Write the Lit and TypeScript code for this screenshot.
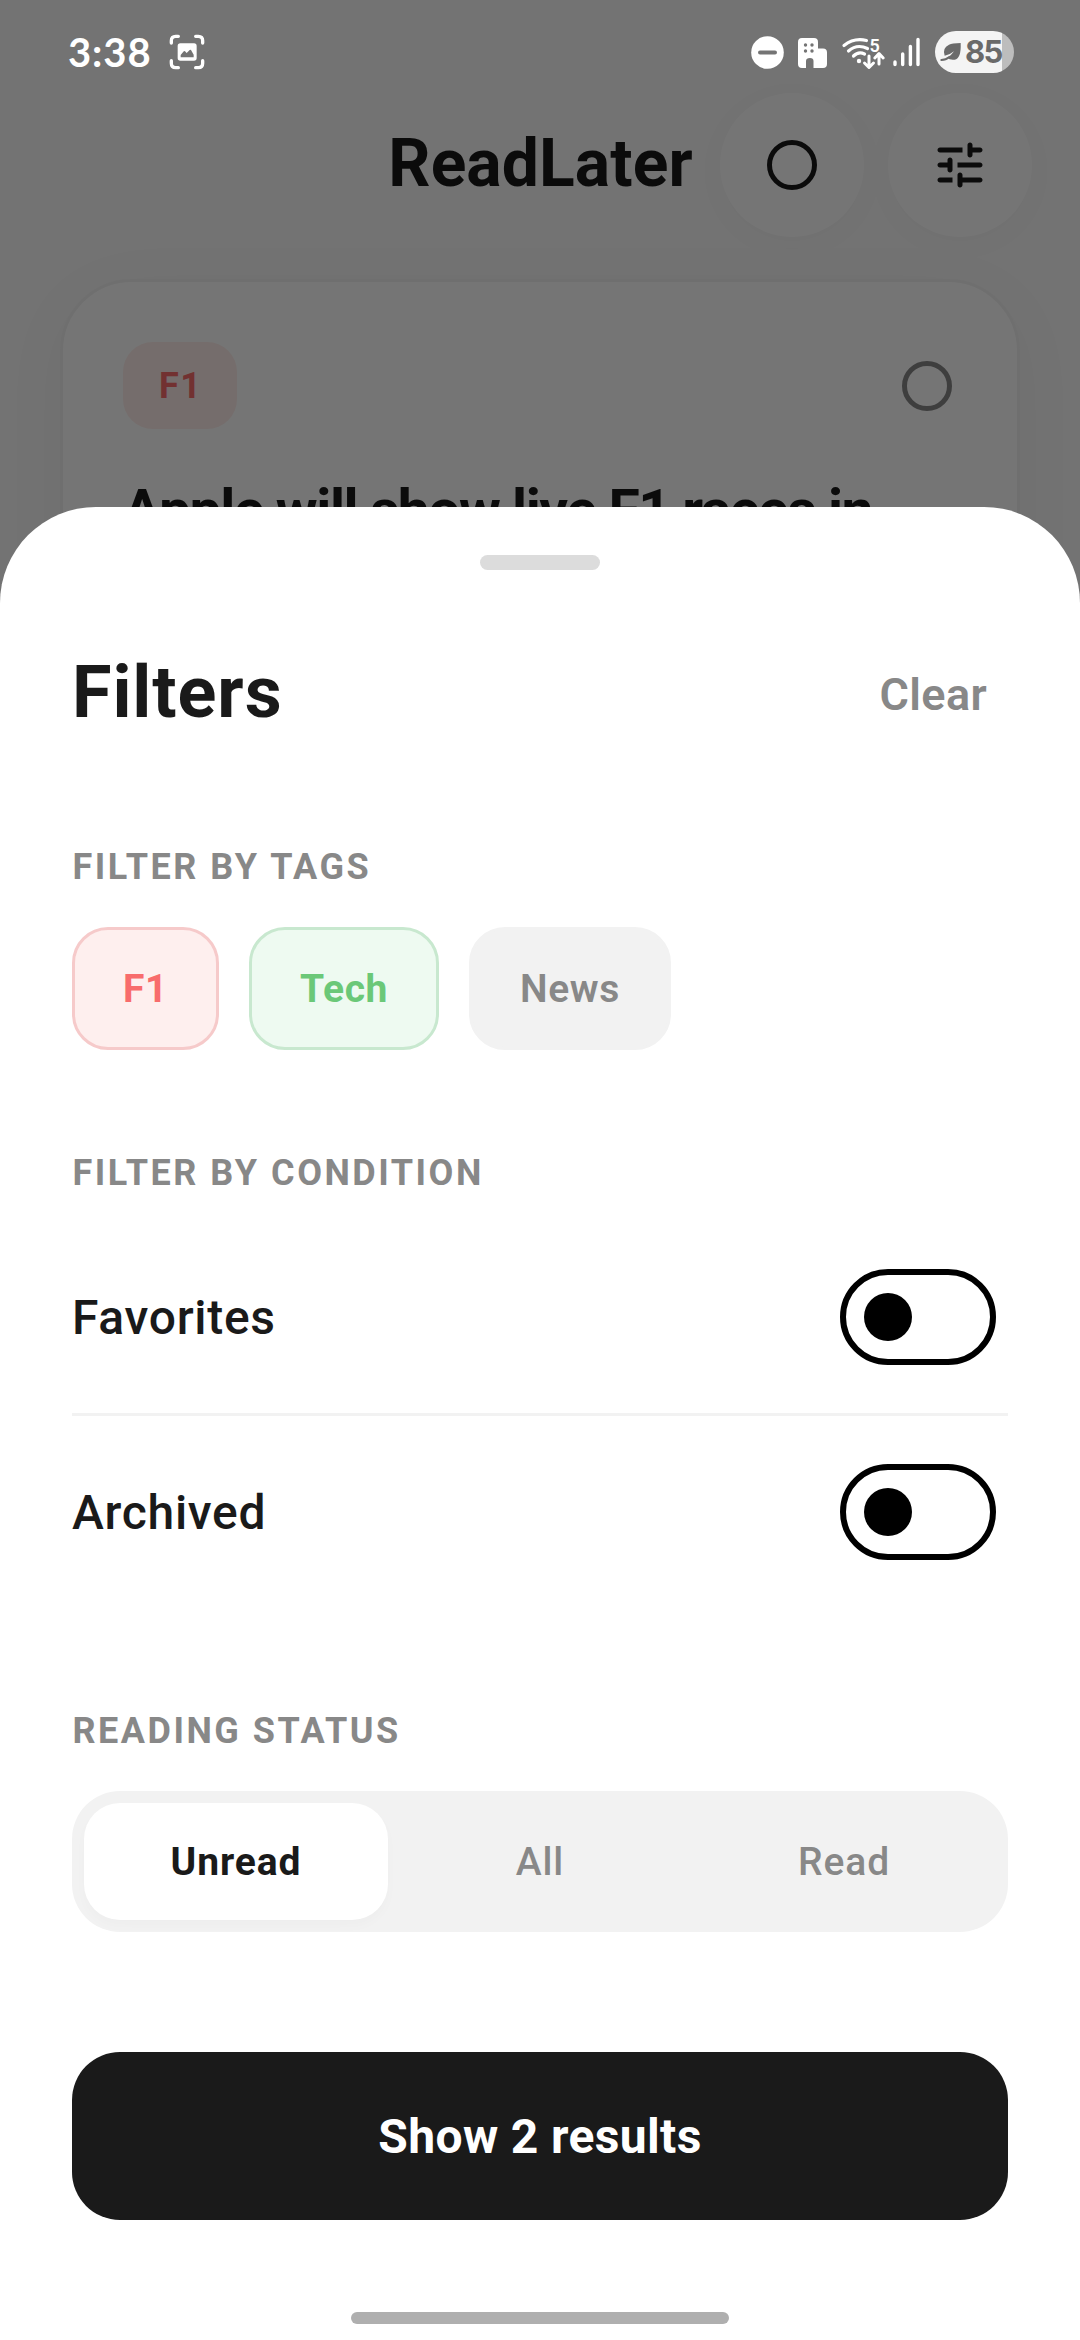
import { LitElement, html, css, svg } from "lit";
import { customElement, property, state } from "lit/decorators.js";
import { classMap } from "lit/directives/class-map.js";

@customElement("status-bar")
class StatusBar extends LitElement {
  static styles = css`
    :host {
      display: flex;
      justify-content: space-between;
      align-items: center;
      height: 104px;
      padding: 0 66px 0 68px;
      box-sizing: border-box;
      color: #fff;
    }
    .left, .right { display: flex; align-items: center; }
    .time {
      font: 700 40px/48px Lato, sans-serif;
      letter-spacing: 0.9px;
      width: 101px;
    }
    svg { display: block; overflow: visible; }
    .dnd { margin-right: 14px; }
    .building { margin: 1px 15px 0 0; }
    .wifi { margin: 2px 8px 0 0; }
    .signal { margin-right: 15px; }
    .battery {
      display: flex;
      align-items: center;
      width: 79px;
      height: 42px;
      border-radius: 21px;
      background: linear-gradient(90deg, #f4f4f4 67px, #bdbdbd 67px);
      color: #6a6a6a;
      box-sizing: border-box;
      padding-left: 5px;
      gap: 3px;
    }
    .level { font: 700 31px/42px Inter, sans-serif; letter-spacing: -1.6px; }
  `;
  render() {
    return html`
      <div class="left">
        <span class="time">3:38</span>
        <svg width="36" height="36" viewBox="0 0 108 108">
          <g fill="none" stroke="#fff" stroke-width="10" stroke-linecap="round">
            <path d="M7 27V20Q7 7 20 7H28M80 7H88Q101 7 101 20V27M101 80V88Q101 101 88 101H80M28 101H20Q7 101 7 88V80" />
          </g>
          <path fill="#fff" fill-rule="evenodd" d="M37 28H75Q83 28 83 36V72Q83 80 75 80H34Q26 80 26 72V36Q26 28 34 28ZM35 70H74V62L66 48Q64 46 62 48L53 57L48 52Q46 50 43 53L35 63Z" />
        </svg>
      </div>
      <div class="right">
        <svg class="dnd" width="33" height="33" viewBox="0 0 33 33">
          <circle cx="16.5" cy="16.5" r="16.3" fill="#fff" />
          <path d="M9 16.5H24" stroke="#747474" stroke-width="4" stroke-linecap="round" />
        </svg>
        <svg class="building" width="29" height="30" viewBox="0 0 29 30">
          <path fill="#fff" d="M4 0H16Q20 0 20 4V10.500H25Q29 10.500 29 14.500V26Q29 30 25 30H15.500V23Q15.500 20 12 20Q8 20 8 23V30H4Q0 30 0 26V4Q0 0 4 0Z" />
          <g fill="#747474">
            <circle cx="7.500" cy="7" r="1.700" /><circle cx="14" cy="7" r="1.700" />
            <circle cx="7.500" cy="13" r="1.700" /><circle cx="14" cy="13" r="1.700" />
          </g>
        </svg>
        <svg class="wifi" width="43" height="32" viewBox="0 0 43 32">
          <g fill="none" stroke="#fff" stroke-width="3.200" stroke-linecap="round" stroke-linejoin="round">
            <path d="M2 8.500Q12 .5 24.500 3.500" />
            <path d="M6.500 14Q15 6.500 25.500 11.500" />
            <path d="M11.500 19Q16.500 14 22.500 17" />
            <path stroke-width="3" d="M27 19V30M22.500 26L27 30.500L31.500 26M37 27V17M32.800 21L37 16.500L41.200 21" />
          </g>
          <circle cx="17" cy="24" r="2.200" fill="#fff" />
          <text x="27.500" y="14.500" fill="#fff" font-family="Roboto, sans-serif" font-weight="600" font-size="18">5</text>
        </svg>
        <svg class="signal" width="27" height="30" viewBox="0 0 27 30">
          <g stroke="#fff" stroke-width="3.400" stroke-linecap="round">
            <path d="M2 25V27.500M9.700 17V27.500M17.400 9.500V27.500M25 2.500V27.500" />
          </g>
        </svg>
        <div class="battery">
          <svg width="22" height="20" viewBox="0 0 66 60">
            <path fill="#6a6a6a" d="M62 3Q64 50 44 53Q30 55 21 47Q33 42 42 28Q28 40 14 41Q6 18 27 8Q36 3 62 3Z" />
            <path fill="none" stroke="#6a6a6a" stroke-width="6" stroke-linecap="round" d="M4 54Q18 54 27 46" />
          </svg>
          <span class="level">85</span>
        </div>
      </div>
    `;
  }
}

@customElement("toggle-switch")
class ToggleSwitch extends LitElement {
  @property({ type: Boolean, reflect: true }) on = false;
  static styles = css`
    :host { display: block; }
    .track {
      display: flex;
      align-items: center;
      box-sizing: border-box;
      width: 156px;
      height: 96px;
      padding: 0 18px;
      border: 6px solid #000;
      border-radius: 48px;
    }
    .thumb { width: 48px; height: 48px; border-radius: 50%; background: #000; }
    :host([on]) .track { justify-content: flex-end; }
  `;
  render() {
    return html`<div class="track" role="switch" aria-checked=${this.on}><div class="thumb"></div></div>`;
  }
}

const tuneIcon = svg`<path fill="#1a1a1a" d="M3 18c0 .55.45 1 1 1h5v-2H4c-.55 0-1 .45-1 1zM3 6c0 .55.45 1 1 1h9V5H4c-.55 0-1 .45-1 1zm10 14v-1h7c.55 0 1-.45 1-1s-.45-1-1-1h-7v-1c0-.55-.45-1-1-1s-1 .45-1 1v4c0 .55.45 1 1 1s1-.45 1-1zM7 10v1H4c-.55 0-1 .45-1 1s.45 1 1 1h3v1c0 .55.45 1 1 1s1-.45 1-1v-4c0-.55-.45-1-1-1s-1 .45-1 1zm14 2c0-.55-.45-1-1-1h-9v2h9c.55 0 1-.45 1-1zm-5-3c.55 0 1-.45 1-1V7h3c.55 0 1-.45 1-1s-.45-1-1-1h-3V4c0-.55-.45-1-1-1s-1 .45-1 1v4c0 .55.45 1 1 1z"/>`;

@customElement("app-root")
class AppRoot extends LitElement {
  @state() private status = "Unread";
  private tags = [
    { label: "F1", tone: "red" },
    { label: "Tech", tone: "green" },
    { label: "News", tone: "plain" },
  ];
  private conditions = ["Favorites", "Archived"];

  static styles = css`
    :host {
      display: grid;
      width: 1080px;
      height: 2340px;
      overflow: hidden;
      background: #fafafa;
      font-family: Roboto, sans-serif;
      color: #1a1a1a;
    }
    .page, .scrim, .front { grid-area: 1 / 1; min-width: 0; min-height: 0; }
    .page { padding: 93px 60px 0; overflow: hidden; }
    .scrim { background: rgba(0, 0, 0, 0.54); }
    .front { display: flex; flex-direction: column; justify-content: space-between; z-index: 1; }
    .bar {
      display: grid;
      grid-template-columns: 1fr auto 1fr;
      align-items: center;
      height: 144px;
      margin-right: -12px;
      margin-left: -12px;
    }
    .title {
      grid-column: 2;
      margin: 0;
      font-size: 66px;
      line-height: 78px;
      font-weight: 700;
      letter-spacing: 0.1px;
      padding: 0 0 2px 1px;
    }
    .actions { display: flex; justify-content: flex-end; gap: 24px; }
    .round {
      display: grid;
      place-items: center;
      width: 144px;
      height: 144px;
      border-radius: 50%;
      background: #fff;
      box-shadow: 0 6px 36px rgba(0, 0, 0, 0.025);
    }
    .card {
      box-sizing: border-box;
      height: 700px;
      margin-top: 42px;
      padding: 60px;
      border: 3px solid #f2f2f2;
      border-radius: 72px;
      background: #fff;
      box-shadow: 0 12px 72px rgba(0, 0, 0, 0.035);
    }
    .cardtop { display: flex; justify-content: space-between; align-items: center; height: 87px; }
    .mini {
      padding: 0 35px 0 36px;
      border-radius: 30px;
      background: #feeeeb;
      color: #f86c6c;
      font-size: 36px;
      line-height: 88px;
      height: 87px;
      font-weight: 700;
      letter-spacing: 1.4px;
    }
    .mark { display: block; margin-right: 5px; }
    .headline {
      margin: 48px 0 0;
      font-size: 57px;
      line-height: 68px;
      font-weight: 700;
      letter-spacing: -1.45px;
      white-space: nowrap;
    }
    .sheet {
      display: flex;
      flex-direction: column;
      box-sizing: border-box;
      height: 1833px;
      padding: 48px 72px 0;
      border-radius: 96px 96px 0 0;
      background: #fff;
    }
    .handle { align-self: center; flex: none; width: 120px; height: 15px; border-radius: 8px; background: #dcdcdc; }
    .sheethead { display: flex; justify-content: space-between; align-items: center; height: 96px; margin-top: 76px; }
    .filters { margin: 0; padding-bottom: 3px; font-size: 72px; line-height: 84px; font-weight: 700; letter-spacing: 0.9px; }
    .clear { padding-right: 21px; font-size: 45px; line-height: 55px; font-weight: 600; letter-spacing: 0.35px; color: #888; }
    .label { margin: 102px 0 0; font-size: 36px; line-height: 42px; font-weight: 700; letter-spacing: 2.5px; color: #888; padding-left: 0.5px; }
    .label.first { margin-top: 104px; }
    .chips { display: flex; gap: 30px; margin-top: 39px; }
    .chip {
      box-sizing: border-box;
      height: 123px;
      padding: 0 48px;
      border: 3px solid transparent;
      border-radius: 36px;
      font-size: 39px;
      line-height: 119px;
      font-weight: 600;
      letter-spacing: 0.6px;
    }
    .chip.red { background: #feefee; border-color: #f6caca; color: #f86c6c; font-weight: 700; }
    .chip.green { background: #eefaf1; border-color: #c8e8cf; color: #6bc878; font-weight: 700; }
    .chip.plain { background: #f2f2f2; border-color: #f2f2f2; color: #888; }
    .conditions { margin-top: 27px; }
    .row {
      display: flex;
      justify-content: space-between;
      align-items: center;
      height: 192px;
      padding-right: 12px;
      font-size: 48px;
      font-weight: 500;
      letter-spacing: 0.7px;
    }
    .row + .row { border-top: 3px solid #f2f2f2; }
    .segments {
      display: grid;
      grid-template-columns: repeat(3, 1fr);
      box-sizing: border-box;
      height: 141px;
      margin-top: 39px;
      padding: 12px;
      border-radius: 48px;
      background: #f2f2f2;
    }
    .seg {
      height: 117px;
      border-radius: 36px;
      text-align: center;
      font-size: 39px;
      line-height: 119px;
      font-weight: 500;
      letter-spacing: 0.9px;
      color: #888;
    }
    .seg.active { background: #fff; color: #1a1a1a; font-weight: 700; box-shadow: 0 6px 12px rgba(0, 0, 0, 0.02); }
    .show {
      margin-top: 120px;
      height: 168px;
      border-radius: 48px;
      background: #1a1a1a;
      color: #fff;
      text-align: center;
      font-size: 48px;
      line-height: 170px;
      font-weight: 700;
      letter-spacing: 0.35px;
    }
    .home { align-self: center; width: 378px; height: 12px; margin-top: 92px; border-radius: 6px; background: #afafaf; }
  `;

  render() {
    return html`
      <main class="page">
        <header class="bar">
          <h1 class="title">ReadLater</h1>
          <div class="actions">
            <div class="round">
              <svg width="50" height="50" viewBox="0 0 50 50"><circle cx="25" cy="25" r="22.500" fill="none" stroke="#1a1a1a" stroke-width="5" /></svg>
            </div>
            <div class="round"><svg width="60" height="60" viewBox="0 0 24 24">${tuneIcon}</svg></div>
          </div>
        </header>
        <article class="card">
          <div class="cardtop">
            <span class="mini">F1</span>
            <svg class="mark" width="68" height="50" viewBox="0 0 68 50"><circle cx="43" cy="25" r="22.500" fill="none" stroke="#888" stroke-width="5" /></svg>
          </div>
          <h2 class="headline">Apple will show live F1 races in</h2>
        </article>
      </main>
      <div class="scrim"></div>
      <div class="front">
        <status-bar></status-bar>
        <section class="sheet">
          <div class="handle"></div>
          <div class="sheethead">
            <h2 class="filters">Filters</h2>
            <span class="clear">Clear</span>
          </div>
          <h3 class="label first">FILTER BY TAGS</h3>
          <div class="chips">
            ${this.tags.map((t) => html`<span class=${classMap({ chip: true, [t.tone]: true })}>${t.label}</span>`)}
          </div>
          <h3 class="label">FILTER BY CONDITION</h3>
          <div class="conditions">
            ${this.conditions.map((c) => html`<div class="row"><span>${c}</span><toggle-switch></toggle-switch></div>`)}
          </div>
          <h3 class="label">READING STATUS</h3>
          <div class="segments">
            ${["Unread", "All", "Read"].map(
              (s) => html`<div class=${classMap({ seg: true, active: s === this.status })} @click=${() => (this.status = s)}>${s}</div>`
            )}
          </div>
          <div class="show">Show 2 results</div>
          <div class="home"></div>
        </section>
      </div>
    `;
  }
}
